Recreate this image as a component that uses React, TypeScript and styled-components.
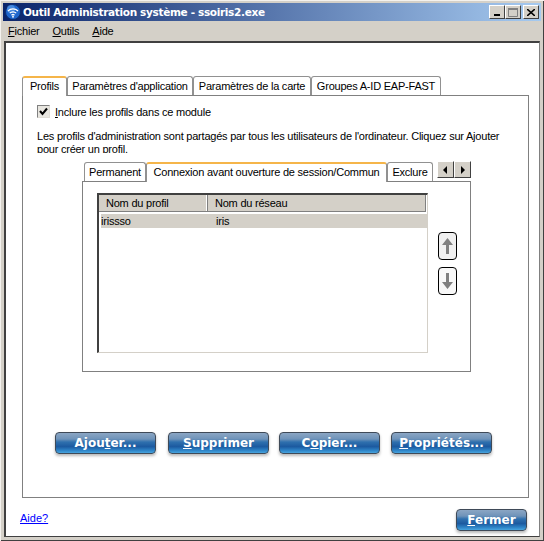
import React from 'react';
import styled, { createGlobalStyle } from 'styled-components';

const Global = createGlobalStyle`
  html, body { margin: 0; padding: 0; background: #d4d0c8; }
  body { font-family: "Liberation Sans", Arial, sans-serif; font-size: 11px; letter-spacing: -0.22px; color: #000; }
`;

const Win = styled.div`
  box-sizing: border-box;
  width: 544px;
  height: 541px;
  overflow: hidden;
  display: flex;
  flex-direction: column;
  padding: 3px 3px 4px 3px;
  background: #d4d0c8;
  box-shadow: inset 1px 1px 0 #f4f2ee, inset -1px -1px 0 #404040;
`;

const TitleBar = styled.div`
  height: 18px;
  flex: none;
  display: flex;
  align-items: center;
  padding: 0 2px;
  background: linear-gradient(90deg, #0a246a 0%, #a6caf0 100%);
`;

const TitleText = styled.div`
  flex: 1;
  margin-left: 2px;
  font-family: "DejaVu Sans", Verdana, sans-serif;
  font-weight: 700;
  font-size: 10.5px;
  letter-spacing: -0.33px;
  color: #fff;
  white-space: nowrap;
`;

const CapButton = styled.div<{ $gap?: number }>`
  box-sizing: border-box;
  width: 16px;
  height: 14px;
  margin-left: ${(p) => p.$gap ?? 0}px;
  background: #d4d0c8;
  border: 1px solid;
  border-color: #fff #404040 #404040 #fff;
  display: flex;
  align-items: center;
  justify-content: center;
`;

const MenuBar = styled.div`
  height: 20px;
  flex: none;
  display: flex;
  align-items: center;
  gap: 13px;
  padding-left: 5px;
`;

const Client = styled.div`
  flex: 1;
  min-height: 0;
  display: flex;
  flex-direction: column;
  margin: 0 1px;
  background: #fff;
  border-top: 2px solid #404040;
  border-left: 2px solid #404040;
  border-right: 1px solid #808080;
  border-bottom: 1px solid #404040;
  padding: 33px 12px 0 16px;
`;

const TabRow = styled.div<{ $indent?: number }>`
  display: flex;
  align-items: flex-start;
  height: 19px;
  padding-left: ${(p) => p.$indent ?? 0}px;
  position: relative;
  z-index: 1;
`;

const Tab = styled.div<{ $active?: boolean; $w: number }>`
  box-sizing: border-box;
  width: ${(p) => p.$w}px;
  height: ${(p) => (p.$active ? 20 : 19)}px;
  padding-top: ${(p) => (p.$active ? 2 : 3)}px;
  text-align: center;
  white-space: nowrap;
  background: #fff;
  border: 1px solid #919191;
  border-bottom: 0;
  border-top: ${(p) => (p.$active ? '2px solid #f5b54a' : '1px solid #919191')};
  border-radius: 3px 3px 0 0;
`;

const Panel = styled.div`
  box-sizing: border-box;
  width: 507px;
  height: 403px;
  border: 1px solid #808080;
  padding: 8px 0 0 14px;
`;

const CheckRow = styled.label`
  display: flex;
  align-items: center;
  gap: 5px;
  height: 15px;
`;

const CheckBox = styled.span`
  box-sizing: border-box;
  width: 13px;
  height: 13px;
  background: #e8e6e0;
  border: 1px solid;
  border-color: #808080 #e0ddd6 #e0ddd6 #808080;
  display: flex;
  align-items: center;
  justify-content: center;
`;

const Blurb = styled.p`
  margin: 11px 0 0 0;
  height: 23px;
  overflow: hidden;
  line-height: 13px;
  width: 480px;
`;

const Nested = styled.div`
  margin: 9px 0 0 45px;
`;

const ScrollBox = styled.div`
  display: flex;
  margin: -1px 0 0 4px;
`;

const ScrollBtn = styled.div`
  box-sizing: border-box;
  width: 17px;
  height: 17px;
  background: #d4d0c8;
  border: 1px solid;
  border-color: #fff #404040 #404040 #fff;
  display: flex;
  align-items: center;
  justify-content: center;
`;

const InnerPanel = styled.div`
  box-sizing: border-box;
  width: 389px;
  height: 191px;
  border: 1px solid #808080;
  padding: 11px 0 0 14px;
  display: flex;
`;

const List = styled.div`
  box-sizing: border-box;
  width: 331px;
  height: 160px;
  border: 1px solid;
  border-color: #404040 #d4d0c8 #d4d0c8 #404040;
  border-top-width: 2px;
  border-left-width: 2px;
`;

const HeadRow = styled.div`
  display: flex;
  height: 17px;
  margin-right: 1px;
  background: #d4d0c8;
  border-right: 1px solid #808080;
  border-bottom: 1px solid #808080;
  box-sizing: border-box;
`;

const HeadCell = styled.div<{ $w?: number }>`
  box-sizing: border-box;
  width: ${(p) => (p.$w ? `${p.$w}px` : 'auto')};
  flex: ${(p) => (p.$w ? 'none' : '1')};
  padding: 2px 0 0 7px;
  border-right: ${(p) => (p.$w ? '1px solid #808080' : '0')};
  box-shadow: ${(p) => (p.$w ? 'inset -1px 0 0 #fff' : 'none')};
`;

const DataRow = styled.div`
  display: flex;
  height: 14px;
  margin: 2px 0 0 2px;
  background: #d4d0c8;
  line-height: 14px;
`;

const DataCell = styled.div<{ $w?: number }>`
  width: ${(p) => (p.$w ? `${p.$w}px` : 'auto')};
`;

const MoveColumn = styled.div`
  display: flex;
  flex-direction: column;
  gap: 7px;
  margin: 39px 0 0 10px;
`;

const MoveBtn = styled.div<{ $light?: boolean }>`
  box-sizing: border-box;
  width: 19px;
  height: 28px;
  background: ${(p) => (p.$light ? '#f8f8f8' : '#f0f0f0')};
  border: 1px solid #000;
  border-radius: 4px;
  display: flex;
  align-items: center;
  justify-content: center;
`;

const ActionRow = styled.div`
  display: flex;
  gap: 11px;
  margin: 60px 0 0 18px;

  & > :nth-child(2) {
    margin-left: 1px;
    margin-right: -1px;
  }
`;

const BlueButton = styled.div<{ $w?: number }>`
  box-sizing: border-box;
  width: ${(p) => p.$w ?? 101}px;
  height: 22px;
  border: 1px solid #3f4a58;
  border-radius: 4px;
  background: linear-gradient(180deg, #8ba6c4 0%, #6f93b9 30%, #2f70ae 45%, #1c5aa0 68%, #2f86c9 88%, #48a4de 100%);
  box-shadow: 0 2px 3px rgba(0, 0, 0, 0.28);
  font-family: "DejaVu Sans", Verdana, sans-serif;
  font-weight: 700;
  font-size: 12px;
  letter-spacing: 0;
  line-height: 20px;
  color: #fff;
  text-align: center;
  white-space: nowrap;
`;

const Footer = styled.div`
  display: flex;
  justify-content: space-between;
  align-items: flex-start;
  margin: 11px 0 0 -2px;
`;

const HelpLink = styled.a`
  margin-top: 3px;
  color: #0000ff;
  text-decoration: underline;
  letter-spacing: 0;
`;

const tabs = [
  { label: 'Profils', w: 45, active: true },
  { label: "Paramètres d'application", w: 126 },
  { label: 'Paramètres de la carte', w: 118 },
  { label: 'Groupes A-ID EAP-FAST', w: 130 },
];

const innerTabs = [
  { label: 'Permanent', w: 62 },
  { label: 'Connexion avant ouverture de session/Commun', w: 241, active: true },
  { label: 'Exclure', w: 46 },
];

const AppIcon = () => (
  <svg width="16" height="16" viewBox="0 0 16 16">
    <circle cx="8" cy="8" r="7.5" fill="#1f66cc" stroke="#0b2f74" />
    <circle cx="6" cy="5" r="4" fill="#5a9be8" opacity="0.7" />
    <path d="M3 7a7 7 0 0 1 10 0M4.8 9.2a4.4 4.4 0 0 1 6.4 0M6.5 11.2a2.2 2.2 0 0 1 3 0" fill="none" stroke="#fff" strokeWidth="1.2" />
    <rect x="7.2" y="12" width="1.6" height="1.6" fill="#fff" />
  </svg>
);

const Triangle = ({ dir }: { dir: 'left' | 'right' }) => (
  <svg width="5" height="8" viewBox="0 0 5 8">
    <path d={dir === 'left' ? 'M4 0v8L0 4z' : 'M1 0v8l4-4z'} fill="#000" />
  </svg>
);

const MoveArrow = ({ down }: { down?: boolean }) => (
  <svg width="11" height="16" viewBox="0 0 11 16">
    <path d={down ? 'M4 0h3v9h4l-5.5 7L0 9h4z' : 'M5.5 0L11 7H7v9H4V7H0z'} fill="#808080" />
  </svg>
);

export default function App() {
  return (
    <Win>
      <Global />
      <TitleBar>
        <AppIcon />
        <TitleText>Outil Administration système - ssoiris2.exe</TitleText>
        <CapButton>
          <svg width="8" height="8" viewBox="0 0 8 8"><rect x="1" y="6" width="6" height="2" fill="#000" /></svg>
        </CapButton>
        <CapButton>
          <svg width="10" height="9" viewBox="0 0 10 9"><path d="M.5 1.5h9v7h-9z" fill="none" stroke="#808080" /><rect width="10" height="2" fill="#808080" /></svg>
        </CapButton>
        <CapButton $gap={2}>
          <svg width="8" height="7" viewBox="0 0 8 7"><path d="M0 0l8 7M8 0L0 7" stroke="#000" strokeWidth="1.6" /></svg>
        </CapButton>
      </TitleBar>
      <MenuBar>
        <span><u>F</u>ichier</span>
        <span><u>O</u>utils</span>
        <span><u>A</u>ide</span>
      </MenuBar>
      <Client>
        <TabRow>
          {tabs.map((t) => (
            <Tab key={t.label} $w={t.w} $active={t.active}>{t.label}</Tab>
          ))}
        </TabRow>
        <Panel>
          <CheckRow>
            <CheckBox>
              <svg width="9" height="9" viewBox="0 0 9 9"><path d="M1 4l2.5 3L8 1.5" fill="none" stroke="#000" strokeWidth="2" /></svg>
            </CheckBox>
            <span><u>I</u>nclure les profils dans ce module</span>
          </CheckRow>
          <Blurb>
            Les profils d'administration sont partagés par tous les utilisateurs de l'ordinateur. Cliquez sur Ajouter
            pour créer un profil.
          </Blurb>
          <Nested>
            <TabRow $indent={2}>
              {innerTabs.map((t) => (
                <Tab key={t.label} $w={t.w} $active={t.active}>{t.label}</Tab>
              ))}
              <ScrollBox>
                <ScrollBtn><Triangle dir="left" /></ScrollBtn>
                <ScrollBtn><Triangle dir="right" /></ScrollBtn>
              </ScrollBox>
            </TabRow>
            <InnerPanel>
              <List>
                <HeadRow>
                  <HeadCell $w={109}>Nom du profil</HeadCell>
                  <HeadCell>Nom du réseau</HeadCell>
                </HeadRow>
                <DataRow>
                  <DataCell $w={115}>irissso</DataCell>
                  <DataCell>iris</DataCell>
                </DataRow>
              </List>
              <MoveColumn>
                <MoveBtn><MoveArrow /></MoveBtn>
                <MoveBtn $light><MoveArrow down /></MoveBtn>
              </MoveColumn>
            </InnerPanel>
          </Nested>
          <ActionRow>
            <BlueButton>Ajou<u>t</u>er...</BlueButton>
            <BlueButton><u>S</u>upprimer</BlueButton>
            <BlueButton>C<u>o</u>pier...</BlueButton>
            <BlueButton><u>P</u>ropriétés...</BlueButton>
          </ActionRow>
        </Panel>
        <Footer>
          <HelpLink>Aide?</HelpLink>
          <BlueButton $w={71}><u>F</u>ermer</BlueButton>
        </Footer>
      </Client>
    </Win>
  );
}
